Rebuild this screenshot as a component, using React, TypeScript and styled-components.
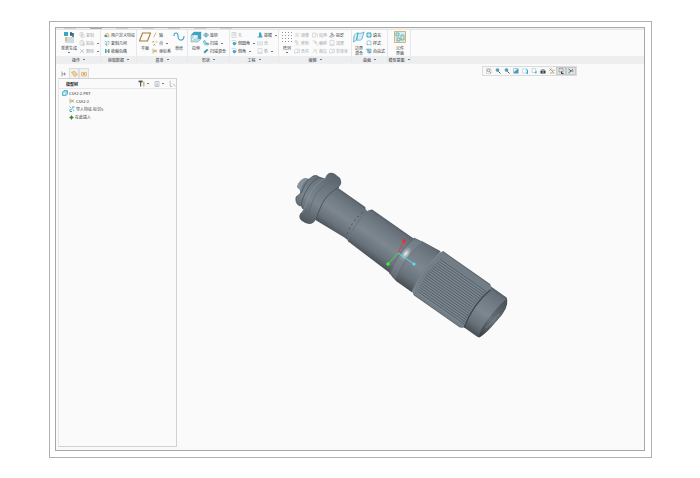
import React from "react";
import styled, { createGlobalStyle } from "styled-components";

const Global = createGlobalStyle`
  * { box-sizing: border-box; }
  body { margin: 0; background: #fff; }
  button { border: 0; padding: 0; margin: 0; background: none; font: inherit; color: inherit; }
  ul { list-style: none; margin: 0; padding: 0; }
  h2 { margin: 0; font: inherit; }
`;

const Page = styled.div`
  min-height: 100vh;
  padding: 21px 48px 20px 49px;
  display: flex;
  font-family: "Noto Sans CJK SC", "Liberation Sans", sans-serif;
  font-size: 4px;
  line-height: 6px;
  color: #33383d;
`;
const Frame = styled.div`
  flex: 1;
  display: flex;
  border: 1px solid #b0b0b0;
  padding: 5px 6px 6px 5px;
`;
const Window = styled.div`
  flex: 1;
  display: flex;
  flex-direction: column;
  border: 1px solid #a8a8a8;
  background: #fafafb;
  min-width: 0;
`;

const TabEdge = styled.div`
  height: 2px;
  flex: none;
  display: flex;
  gap: 14px;
  padding-left: 8px;
  background: #f1f1f2;
  border-bottom: 1px solid #e4e5e6;
`;
const TabMark = styled.span<{ $on?: boolean }>`
  width: 12px;
  height: 1px;
  background: ${(p) => (p.$on ? "#a9acae" : "#d0d2d4")};
`;

const Ribbon = styled.div`
  flex: none;
  display: flex;
  padding-left: 1px;
  background: linear-gradient(#fbfbfb 26px, #eceef0 26px);
  border-bottom: 1px solid #f0f0f1;
`;
const GroupBox = styled.section<{ $w: number }>`
  width: ${(p) => p.$w}px;
  flex: none;
  border-right: 1px solid #e6e8ea;
`;
const Tools = styled.div<{ $pad: number }>`
  height: 26px;
  padding: 1px 0 0 ${(p) => p.$pad}px;
  display: flex;
`;
const GroupName = styled.button`
  display: flex;
  width: 100%;
  height: 7px;
  align-items: center;
  justify-content: center;
  gap: 1px;
  white-space: nowrap;
`;
const Column = styled.div<{ $w: number }>`
  width: ${(p) => p.$w}px;
  flex: none;
  display: flex;
  flex-direction: column;
  gap: 2px;
  padding-top: 1px;
`;
const SmallTool = styled.button<{ $off?: boolean }>`
  display: flex;
  height: 6px;
  align-items: center;
  gap: 1px;
  white-space: nowrap;
  color: ${(p) => (p.$off ? "#a3a7aa" : "inherit")};
  svg { opacity: ${(p) => (p.$off ? 0.6 : 1)}; }
`;
const BigTool = styled.button<{ $w: number }>`
  width: ${(p) => p.$w}px;
  flex: none;
  display: flex;
  flex-direction: column;
  align-items: center;
  justify-content: flex-start;
  line-height: 5px;
  white-space: nowrap;
`;
const BigText = styled.span`
  display: block;
  padding-top: 3px;
`;
const Arrow = styled.span`
  width: 2px;
  height: 1px;
  margin-left: 2px;
  background: #777;
`;
const ArrowBelow = styled(Arrow)`
  margin: 1px 0 0;
`;

const Work = styled.div`
  flex: 1;
  display: flex;
`;
const Side = styled.aside`
  width: 121px;
  flex: none;
  display: flex;
  flex-direction: column;
  padding: 4px 0 3px 2px;
`;
const SideTabs = styled.div`
  display: flex;
  height: 10px;
  flex: none;
  padding-left: 1px;
`;
const SideTab = styled.button<{ $on?: boolean }>`
  width: 10px;
  display: flex;
  align-items: center;
  justify-content: center;
  border: 1px solid ${(p) => (p.$on ? "transparent" : "#dcdddf")};
  border-bottom: 0;
  background: ${(p) => (p.$on ? "transparent" : "#f1f1f1")};
`;
const Panel = styled.div`
  flex: 1;
  border: 1px solid #d0d1d3;
  border-left-color: #e8e8e8;
  background: #fafafa;
`;
const PanelHead = styled.div`
  height: 9px;
  display: flex;
  align-items: center;
  padding: 0 0 0 7px;
  color: #15181b;
`;
const HeadTitle = styled.h2`
  flex: 1;
  font-weight: 700;
`;
const HeadTool = styled.button`
  display: flex;
  align-items: center;
  margin-left: 5px;
`;
const Tree = styled.ul`
  border-top: 1px solid #e6e7e8;
`;
const Node = styled.li<{ $depth: number }>`
  display: flex;
  align-items: center;
  gap: 1px;
  height: 8px;
  padding-left: ${(p) => 3 + p.$depth * 7}px;
`;

const View = styled.main`
  flex: 1;
  min-width: 0;
  display: flex;
  flex-direction: column;
  align-items: center;
  padding-top: 2px;
`;
const ViewBar = styled.div`
  display: flex;
  margin-left: 238px;
  border: 1px solid #dadcde;
  background: #f8f8f8;
  padding-left: 1px;
`;
const ViewButton = styled.button<{ $on?: boolean }>`
  width: ${(p) => (p.$on ? 10 : 9)}px;
  height: 8px;
  display: flex;
  align-items: center;
  justify-content: center;
  background: ${(p) => (p.$on ? "#dfe1e3" : "transparent")};
  box-shadow: ${(p) => (p.$on ? "inset 0 0 0 1px #c6c8ca" : "none")};
`;
const Part = styled.svg`
  width: 224px;
  height: 176px;
  margin: 92px 17px 0 0;
`;

const B = "#3aa5c4";
const D = "#4e565d";
const O = "#d59a3c";
const G = "#8e9499";

const art: Record<string, React.ReactNode> = {
  regen: (<><path d="M1 1h4v4H1z" fill={B} /><path d="M8 1v4M7 3h3M10 2v4" stroke="#27627c" strokeWidth="1.500" /><path d="M2 7h9M2 9h9M2 11h9" stroke="#a9bcc3" /><path d="M2 7h2M2 9h2" stroke={O} /></>),
  copy: <path d="M2 1h5v7H2zM5 4h5v7H5z" stroke={G} />,
  paste: <path d="M2 2h7v8H2zM4 1h3M6 6h5v5H6z" stroke={G} />,
  cross: <path d="M2 2l8 8M10 2l-8 8" stroke={D} />,
  udf: (<><path d="M2 5l4-3 4 3v5H3z" fill="#f5ddb0" stroke={O} /><path d="M1 6h5v4H1z" fill={B} /></>),
  geom: (<><path d="M1 2l4 2v6M5 4l5-2v6l-5 3" stroke={B} /><path d="M2 7l3 4" stroke={D} /></>),
  shrink: (<><path d="M2 2h3v8H2zM8 2h3v8H8z" fill={B} /><path d="M5 9l4-5" stroke={O} strokeWidth="2" /></>),
  plane: <path d="M3.500 2h8L8.500 10H.5z" stroke="#a57d32" strokeWidth="1.100" />,
  axis: <path d="M3 11 8 1" stroke="#a57d32" />,
  point: <path d="M1 2l3 3M4 2 1 5M8 3l2 2M10 3 8 5M3 8l3 3M6 8l-3 3" stroke="#8a6d35" />,
  csys: <path d="M2 1v10M2 6h8M4 3l5 6M9 3 4 9" stroke="#a57d32" />,
  sketch: <path d="M1 5c0-4 4-4 4 0 0 6 6 5 6 0" stroke={B} strokeWidth="1.100" />,
  extrude: (<><path d="M1 4l3-3h7v7L8 11H1z" fill="#b9d9e3" stroke="#8aa7b1" strokeWidth=".5" /><path d="M4 1h7v7H8V4H1l3-3" fill={B} /><path d="M2 9l4-4M4 5h2v2" stroke="#fff" /></>),
  revolve: (<><ellipse cx="6" cy="6" rx="5" ry="3" fill="#a8d5e2" stroke={B} /><path d="M6 1v10" stroke={D} /></>),
  sweep: (<><path d="M1 2l3-1 2 5h5v4H5C2 9 1 6 1 2z" fill="#a8d5e2" stroke={B} /><path d="M6 7h3" stroke={D} /></>),
  blend: (<><path d="M1 8l7-6 3 2-7 7z" fill={B} /><path d="M2 8l7-5" stroke={D} /></>),
  hole: <path d="M2 1h8v10H2zM5 1v6h3V1" stroke={G} />,
  round: (<><path d="M1 1h6a4 4 0 0 1 4 4v3" stroke="#a7b7bd" /><path d="M5 4a4 4 0 0 1 5 5l-4 2-3-4z" fill={B} /></>),
  draft: (<><path d="M4 1h4l2 9H4z" fill={B} /><path d="M1 10h10" stroke={B} strokeWidth="2" /></>),
  shell: <path d="M1 2v8h10V2M4 2v5h4V2" stroke={G} />,
  pattern: (<>{[1.500, 4.500, 7.500, 10.500].map((y) => <path key={y} d={`M1 ${y}h10`} stroke={G} strokeWidth="1" strokeDasharray="1 2" />)}</>),
  mirror: <path d="M1 2l4 4-4 4M11 2 7 6l4 4M6 1v10" stroke={G} />,
  trim: <path d="M2 1h4v4H2zM5 5l5 6M4 11l5-8" stroke={G} />,
  merge: <path d="M1 4c5-5 9 0 5 6H1zM6 4l5-2v7H6" stroke={G} />,
  extend: <path d="M1 2h6v8H1zM8 4h3v7" stroke={G} />,
  offset: <path d="M1 2h6v6M4 5h6v6" stroke={G} />,
  cut: <path d="M1 9l9-6M3 2c5 1 6 5 6 9" stroke={G} />,
  project: (<><path d="M1 10l3-4h7l-3 4z" stroke="#7b6394" /><path d="M6 1v6M3 3l5 2" stroke={D} /></>),
  thick: <path d="M2 1h8v8H2zM1 11h10" stroke={G} />,
  boundary: (<><path d="M1 5c1-2 2-3 4-3L3.500 9 .5 11zM5 2c3 1 3 0 6-1L9 8c-2 2-3 1-5.500 1z" fill="#d8eef5" stroke={B} strokeWidth=".7" /></>),
  fill: (<><path d="M2 2h8v8H2z" fill="#ccebf3" stroke={B} strokeWidth="2" /></>),
  style: (<><path d="M2 3c2-2 5-2 8 0v7c-3-1-5-1-8 0z" stroke={B} /><path d="M1 7l3 3" stroke={O} /></>),
  free: (<><path d="M1 2h9v8H4z" fill="#a8d5e2" stroke={B} /><path d="M4 3l4 7" stroke={D} /></>),
  comp: (<><path d="M.5.5h11v11H.5z" fill="#d5eef3" stroke="#d5b568" /><path d="M2 2h3v3H2zM7 4h3v5H7zM3 7h3v3H3z" fill="#f4ddb2" stroke={B} strokeWidth=".7" /></>),
  treeTab: <path d="M2 1v10M2 6h8M7 3v6" stroke={D} />,
  folder: (<><path d="M1 4l5-2 5 6-5 3z" fill="#f1d295" stroke={O} /></>),
  star: (<><path d="M1 3h10v7H1z" fill="#f6e4bd" stroke={O} /><path d="M4 6h4M6 4v4" stroke="#a45f22" /></>),
  hammer: (<><path d="M1 1h7v3H1z" fill={D} /><path d="M4.500 3v8" stroke={D} strokeWidth="2" /><path d="M10 3v8" stroke={O} strokeWidth="2" /></>),
  page: <path d="M2 1h8v10H2zM4 4h4M4 7h4M4 9h3" stroke={G} />,
  search: <path d="M2 1v10h4M7 6l4 5" stroke={G} />,
  part: (<><path d="M1 4l3-3h7v7l-3 3H1z" fill="#8ed0e6" stroke={B} strokeWidth="1.500" /><path d="M3 5h4v4H3z" fill="#eefaff" /></>),
  imp: (<><path d="M6 2h5M4 7l3-2M2 6v5h4" stroke={B} strokeWidth="2" /><path d="M1 1l3 3M8 7l2 3" stroke={B} strokeWidth="1.500" /></>),
  insert: <path d="M6 1v10M1 6h10M3.500 3.500l5 5M8.500 3.500l-5 5" stroke="#258425" strokeWidth="2.200" />,
  zoomBox: (<><path d="M1 1h9v10H1z" stroke="#b6babd" /><circle cx="5" cy="5" r="2.500" stroke={D} /><path d="M7 7l3 3" stroke={D} /></>),
  zoom: (<><circle cx="5" cy="4" r="3" fill={B} stroke="#54849b" /><path d="M7 7l4 4" stroke="#36586a" strokeWidth="2" /></>),
  repaint: (<><path d="M1 1h10v10H1z" fill="#4d9bb4" /><path d="M2 2h7L2 8z" fill="#e5f5fa" /></>),
  cube: (<><path d="M1 2h7v8H1z" fill="#fff" stroke="#8dcada" /><path d="M8 2l3 2v7L8 10" stroke={B} strokeWidth="2" /></>),
  saved: (<><path d="M2 1h7v8H2z" stroke="#8dcada" /><path d="M7 10l4-5v6z" fill={B} /></>),
  camera: (<><path d="M1 5h10v6H1z" fill="#343a3f" /><path d="M3 2h6v3H3z" fill="#9da3a8" /><circle cx="6" cy="8" r="1.500" fill="#eee" /></>),
  datum: (<><path d="M1 1l4 4M5 1 1 5M5 4l5 7M8 3l3 3" stroke="#9c7635" strokeWidth="1.500" /><path d="M2 10h5" stroke={D} /></>),
  note: (<><path d="M2 1h8v7H2z" stroke="#777" /><path d="M7 7v4h4" stroke="#333" strokeWidth="2" /></>),
  spin: (<><path d="M1 2l5 4-5 4" stroke="#397b55" strokeWidth="2" /><path d="M6 6h5" stroke="#c84b4b" strokeWidth="2" /><path d="M6 6l4-4" stroke={B} strokeWidth="2" /></>),
};

const Icon = ({ name, size = 6 }: { name: string; size?: number }) => (
  <svg width={size} height={size} viewBox="0 0 12 12" fill="none" aria-hidden="true">{art[name]}</svg>
);

type Small = { i: string; t: string; a?: boolean; off?: boolean };
type Item = { w: number; big?: string; lines?: string[]; a?: boolean; rows?: Small[] };
type Group = { name: string; w: number; pad: number; items: Item[] };

const groups: Group[] = [
  { name: "操作", w: 44, pad: 2, items: [
    { w: 20, big: "regen", lines: ["重新生成"], a: true },
    { w: 20, rows: [{ i: "copy", t: "复制", off: true }, { i: "paste", t: "粘贴", a: true, off: true }, { i: "cross", t: "删除", a: true, off: true }] }] },
  { name: "获取数据", w: 36, pad: 3, items: [
    { w: 32, rows: [{ i: "udf", t: "用户定义特征" }, { i: "geom", t: "复制几何" }, { i: "shrink", t: "收缩包络" }] }] },
  { name: "基准", w: 51, pad: 1, items: [
    { w: 14, big: "plane", lines: ["平面"] },
    { w: 20, rows: [{ i: "axis", t: "轴" }, { i: "point", t: "点", a: true }, { i: "csys", t: "坐标系" }] },
    { w: 14, big: "sketch", lines: ["草绘"] }] },
  { name: "形状", w: 42, pad: 1, items: [
    { w: 14, big: "extrude", lines: ["拉伸"] },
    { w: 26, rows: [{ i: "revolve", t: "旋转" }, { i: "sweep", t: "扫描", a: true }, { i: "blend", t: "扫描混合" }] }] },
  { name: "工程", w: 49, pad: 1, items: [
    { w: 26, rows: [{ i: "hole", t: "孔", off: true }, { i: "round", t: "倒圆角", a: true }, { i: "round", t: "倒角", a: true }] },
    { w: 21, rows: [{ i: "draft", t: "拔模", a: true }, { i: "shell", t: "壳", off: true }, { i: "thick", t: "筋", a: true, off: true }] }] },
  { name: "编辑", w: 73, pad: 1, items: [
    { w: 14, big: "pattern", lines: ["阵列"], a: true },
    { w: 18, rows: [{ i: "mirror", t: "镜像", off: true }, { i: "trim", t: "修剪", off: true }, { i: "merge", t: "合并", off: true }] },
    { w: 17, rows: [{ i: "extend", t: "延伸", off: true }, { i: "offset", t: "偏移", off: true }, { i: "cut", t: "相交", off: true }] },
    { w: 20, rows: [{ i: "project", t: "投影" }, { i: "thick", t: "加厚", off: true }, { i: "merge", t: "实体化", off: true }] }] },
  { name: "曲面", w: 36, pad: 0, items: [
    { w: 14, big: "boundary", lines: ["边界", "混合"] },
    { w: 21, rows: [{ i: "fill", t: "填充" }, { i: "style", t: "样式" }, { i: "free", t: "自由式" }] }] },
  { name: "模型意图", w: 23, pad: 3, items: [{ w: 18, big: "comp", lines: ["元件", "界面"] }] },
];

const viewTools: [string, string][] = [
  ["zoomBox", "重新调整"], ["zoom", "放大"], ["zoom", "缩小"], ["repaint", "重画"], ["cube", "显示样式"],
  ["saved", "已保存方向"], ["camera", "视图管理器"], ["datum", "基准显示过滤器"], ["note", "注释显示"], ["spin", "旋转中心"],
];

const ribs = Array.from({ length: 18 }, (_, n) => -23 + n * 2.300);

const Flashlight = () => (
  <Part viewBox="290 168 224 176" role="img" aria-label="CSA2-2">
    <defs>
      <linearGradient id="metal" x1="0" y1="0" x2="0" y2="1">
        <stop offset="0" stopColor="#525b63" />
        <stop offset=".06" stopColor="#656e76" />
        <stop offset=".28" stopColor="#727c85" />
        <stop offset=".52" stopColor="#7c8790" />
        <stop offset=".8" stopColor="#69727b" />
        <stop offset="1" stopColor="#484f56" />
      </linearGradient>
      <linearGradient id="flange" gradientUnits="userSpaceOnUse" x1="336" y1="175" x2="304" y2="222">
        <stop offset="0" stopColor="#59636b" />
        <stop offset=".25" stopColor="#69737b" />
        <stop offset=".6" stopColor="#7b868f" />
        <stop offset="1" stopColor="#4f575f" />
      </linearGradient>
      <linearGradient id="face" x1="0" y1="0" x2="0" y2="1">
        <stop offset="0" stopColor="#454d54" />
        <stop offset=".55" stopColor="#687279" />
        <stop offset="1" stopColor="#343b41" />
      </linearGradient>
      <radialGradient id="shine">
        <stop offset="0" stopColor="#eef3f4" />
        <stop offset=".4" stopColor="#b9c4c9" stopOpacity=".8" />
        <stop offset="1" stopColor="#7e8992" stopOpacity="0" />
      </radialGradient>
    </defs>
    <g transform="translate(298 188) rotate(35)" fill="url(#metal)">
      <path d="M22-23H66L68-21H71V14H68L66 14L22 17Z" />
      <path d="M67-17Q63-4 67 11" fill="none" stroke="#505960" strokeWidth="1" strokeDasharray="2 3" />
      <path d="M73-25Q100-25 124-25V17L71 15Q66-5 71-23Z" />
      <path d="M71-22Q66-5 71 14" fill="none" stroke="#69737b" strokeWidth="1" />
      <path d="M124-26Q131-27 135-28L153-30V20H134Q128 19 123 17Q119-5 124-26Z" />
      <path d="M124-26Q118-5 124 18M133-28Q127-5 132 19" fill="none" stroke="#5c666e" strokeWidth=".6" />
      <path d="M125-25Q119-5 125 17L132 19Q127-5 133-27Z" fill="#8b969f" opacity=".3" />
      <ellipse cx="126" cy="-8" rx="5" ry="9" fill="url(#shine)" />
      <path d="M212-30H234Q241-24 239-7Q238 14 233 19H214Z" />
      <path d="M235-29Q242-22 239-5Q237 14 234 19Q229 10 231-5Q232-23 235-29Z" fill="url(#face)" />
      <path d="M237-12Q236-3 234 8" fill="none" stroke="#848e95" strokeWidth=".8" strokeDasharray="3 1" />
      <path d="M155-31H213Q217-30 216-24Q211-5 216 17Q216 21 213 21H156Q152 20 152 17Q147-5 153-28Z" fill="#727d85" />
      <path d="M154-29Q148-5 154 19" fill="none" stroke="#7b868e" strokeWidth="1" />
      <path d="M155-31H213M156 21H213" fill="none" stroke="#5d676f" strokeWidth="1" />
      <path d="M216-27Q210-5 216 19" fill="none" stroke="#3d454b" strokeWidth="1.300" />
      {ribs.map((v) => (
        <path key={v} d={`M${155 + Math.abs(v + 4) / 8} ${v}H${211 + Math.abs(v + 4) / 8}`} stroke="#57616a" strokeWidth=".9" />
      ))}
      {ribs.map((v) => (
        <path key={`l${v}`} d={`M157 ${v + 1.100}H211`} stroke="#8a959d" strokeWidth=".8" opacity=".6" />
      ))}
    </g>
    <g fill="url(#flange)">
      <path d="M297 187Q299 180 305 178L315 180L306 196L300 196V190Z" fill="#6f7a83" />
      <path d="M297 187Q299 180 305 178L308 179Q302 183 301 190Z" fill="#87929b" />
      <path d="M313 176Q317 174 320 178Q309 187 306 203L300 206Q295 204 296 197L302 192Q305 181 313 176Z" stroke="#49525a" strokeWidth=".7" />
      <path d="M319 177L325 179Q312 188 308 206L303 209Q300 206 302 201Q307 184 319 177Z" stroke="#434c53" strokeWidth=".7" />
      <path d="M329 173Q332 172 335 174L340 178Q343 183 339 187Q327 194 322 204Q318 213 316 219Q314 224 309 224Q306 224 302 221Q298 218 300 214Q304 210 305 204Q307 195 313 189Q318 183 325 178Q326 175 329 173Z" />
      <path d="M334 180Q320 186 314 198Q310 207 307 219" fill="none" stroke="#5b656d" strokeWidth=".7" />
      <path d="M327 177Q314 184 309 196Q306 206 302 213" fill="none" stroke="#8d98a0" strokeWidth=".6" />
      <path d="M339 187Q327 194 322 204Q318 213 316 219" fill="none" stroke="#4b555d" strokeWidth="1" />
    </g>
    <g fill="none" strokeWidth="1">
      <path d="M398 253L404 241" stroke="#e23b3b" />
      <path d="M398 253L388 264" stroke="#42dc42" />
      <path d="M398 253L414 264" stroke="#4fe0e8" />
    </g>
    <circle cx="404" cy="241" r="1.800" fill="#f02d2d" />
    <circle cx="388" cy="264" r="1.800" fill="#3df03d" />
    <circle cx="414" cy="264" r="1.500" fill="#55e8f2" />
  </Part>
);

export default function App() {
  return (
    <Page>
      <Global />
      <Frame>
        <Window>
          <TabEdge aria-hidden="true">
            <TabMark /><TabMark $on /><TabMark /><TabMark /><TabMark /><TabMark /><TabMark />
          </TabEdge>
          <Ribbon>
            {groups.map((g) => (
              <GroupBox key={g.name} $w={g.w}>
                <Tools $pad={g.pad}>
                  {g.items.map((it, n) =>
                    it.rows ? (
                      <Column key={n} $w={it.w}>
                        {it.rows.map((r) => (
                          <SmallTool key={r.t} $off={r.off}>
                            <Icon name={r.i} />{r.t}{r.a && <Arrow />}
                          </SmallTool>
                        ))}
                      </Column>
                    ) : (
                      <BigTool key={n} $w={it.w}>
                        <Icon name={it.big!} size={12} />
                        <BigText>{it.lines!.map((l) => <div key={l}>{l}</div>)}</BigText>
                        {it.a && <ArrowBelow />}
                      </BigTool>
                    ),
                  )}
                </Tools>
                <GroupName>{g.name}<Arrow /></GroupName>
              </GroupBox>
            ))}
          </Ribbon>
          <Work>
            <Side>
              <SideTabs>
                <SideTab $on aria-label="模型树"><Icon name="treeTab" /></SideTab>
                <SideTab aria-label="文件夹浏览器"><Icon name="folder" size={7} /></SideTab>
                <SideTab aria-label="收藏夹"><Icon name="star" /></SideTab>
              </SideTabs>
              <Panel>
                <PanelHead>
                  <HeadTitle>模型树</HeadTitle>
                  <HeadTool aria-label="设置"><Icon name="hammer" size={7} /><Arrow /></HeadTool>
                  <HeadTool aria-label="显示"><Icon name="page" /><Arrow /></HeadTool>
                  <HeadTool aria-label="搜索"><Icon name="search" size={7} /></HeadTool>
                </PanelHead>
                <Tree>
                  <Node $depth={0}><Icon name="part" />CSA2-2.PRT</Node>
                  <Node $depth={1}><Icon name="csys" />CSA2-2</Node>
                  <Node $depth={1}><Icon name="imp" />导入特征 标识5</Node>
                  <Node $depth={1}><Icon name="insert" size={5} />在此插入</Node>
                </Tree>
              </Panel>
            </Side>
            <View>
              <ViewBar>
                {viewTools.map(([icon, label], n) => (
                  <ViewButton key={label} aria-label={label} $on={n > 7}><Icon name={icon} /></ViewButton>
                ))}
              </ViewBar>
              <Flashlight />
            </View>
          </Work>
        </Window>
      </Frame>
    </Page>
  );
}
